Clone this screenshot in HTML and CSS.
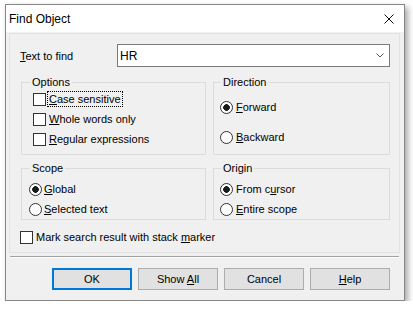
FILE: index.html
```html
<!DOCTYPE html>
<html lang="en">
<head>
  <meta charset="UTF-8">
  <title>Find Object</title>
  <link rel="stylesheet" href="styles.css">
</head>
<body>
  <div class="window">
    <div class="titlebar">
      <span class="title">Find Object</span>
      <svg class="close" width="10" height="10" viewBox="0 0 10 10">
        <path d="M0.5 0.5 L9.5 9.5 M9.5 0.5 L0.5 9.5" stroke="#111" stroke-width="1" fill="none"/>
      </svg>
    </div>
    <div class="client">
      <div class="panel">
        <div class="find-row">
          <span class="find-label"><u>T</u>ext to find</span>
          <div class="combo">
            <span>HR</span>
            <svg width="8" height="5" viewBox="0 0 8 5">
              <path d="M0.5 0.5 L4 4 L7.5 0.5" stroke="#555" stroke-width="1" fill="none"/>
            </svg>
          </div>
        </div>

        <div class="groups">
          <fieldset class="group">
            <legend class="wide">Options</legend>
            <div class="items options">
              <div class="item"><span class="check"></span><span class="focus"><u>C</u>ase sensitive</span></div>
              <div class="item"><span class="check"></span><span><u>W</u>hole words only</span></div>
              <div class="item"><span class="check"></span><span><u>R</u>egular expressions</span></div>
            </div>
          </fieldset>
          <fieldset class="group">
            <legend>Direction</legend>
            <div class="items direction">
              <div class="item"><span class="radio on"></span><span><u>F</u>orward</span></div>
              <div class="item"><span class="radio"></span><span><u>B</u>ackward</span></div>
            </div>
          </fieldset>
          <fieldset class="group">
            <legend class="wide">Scope</legend>
            <div class="items scope">
              <div class="item"><span class="radio on"></span><span><u>G</u>lobal</span></div>
              <div class="item"><span class="radio"></span><span><u>S</u>elected text</span></div>
            </div>
          </fieldset>
          <fieldset class="group">
            <legend>Origin</legend>
            <div class="items origin">
              <div class="item"><span class="radio on"></span><span>From c<u>u</u>rsor</span></div>
              <div class="item"><span class="radio"></span><span><u>E</u>ntire scope</span></div>
            </div>
          </fieldset>
        </div>

        <div class="item mark"><span class="check"></span><span>Mark search result with stack <u>m</u>arker</span></div>
      </div>

      <div class="separator"></div>

      <div class="buttons">
        <button class="btn default">OK</button>
        <button class="btn">Show <u>A</u>ll</button>
        <button class="btn">Cancel</button>
        <button class="btn"><u>H</u>elp</button>
      </div>
    </div>
  </div>
</body>
</html>
```

FILE: styles.css
```css
body {
  margin: 0;
  background: #fff;
  font-family: 'Liberation Sans', Arial, sans-serif;
  font-size: 11px;
  color: #000;
}
.window {
  margin: 4px 0 0 5px;
  width: 400px;
  height: 297px;
  box-sizing: border-box;
  border: 1px solid #868686;
  background: #f0f0f0;
  box-shadow: 3px 3px 6px rgba(0,0,0,0.35);
  display: flex;
  flex-direction: column;
}
.titlebar {
  height: 27px;
  background: #fff;
  display: flex;
  align-items: center;
  justify-content: space-between;
  padding: 0 10px 0 3px;
}
.title {
  font-size: 12px;
}
.close {
  display: block;
}
.client {
  flex: 1;
  padding: 1px 4px 0 3px;
}
.panel {
  height: 220px;
  box-sizing: border-box;
  border: 1px solid #e2e2e2;
  padding: 10px 9px 0 10px;
}
.find-row {
  display: flex;
  align-items: center;
  height: 23px;
}
.find-label {
  width: 97px;
}
.combo {
  flex: 1;
  height: 23px;
  box-sizing: border-box;
  border: 1px solid #7a7a7a;
  background: #fff;
  display: flex;
  align-items: center;
  justify-content: space-between;
  padding: 0 5px 0 2px;
  font-size: 12px;
}
.combo svg {
  display: block;
}
.groups {
  margin: 9px 0 0 1px;
  display: grid;
  grid-template-columns: 185px 177px;
  grid-template-rows: 79px 58px;
  column-gap: 7px;
  row-gap: 7px;
}
.group {
  margin: 0;
  padding: 0;
  border: 1px solid #dcdcdc;
  min-width: 0;
}
.group legend {
  margin-left: 7px;
  padding: 0 2px;
  line-height: 13px;
}
.group legend.wide {
  margin-left: 8px;
}
.item {
  display: flex;
  align-items: center;
  gap: 3px;
  height: 20px;
}
.options {
  padding-left: 11px;
}
.direction {
  padding: 8px 0 0 6px;
}
.direction .item + .item {
  margin-top: 10px;
}
.scope {
  padding: 4px 0 0 7px;
}
.scope .item {
  gap: 2px;
}
.origin {
  padding: 4px 0 0 6px;
}
.check {
  width: 13px;
  height: 13px;
  box-sizing: border-box;
  border: 1px solid #333;
  background: #fff;
}
.radio {
  width: 13px;
  height: 13px;
  box-sizing: border-box;
  border: 1px solid #333;
  border-radius: 50%;
  background: #fff;
}
.radio.on {
  background: radial-gradient(circle, #1a1a1a 3px, #fff 3.6px);
}
.focus {
  outline: 1px dotted #000;
  outline-offset: 0;
  padding: 1px 1px;
  margin-left: -1px;
}
.mark {
  margin-top: 7px;
}
.separator {
  margin: 3px 1px 0 1px;
  border-top: 1px solid #a0a0a0;
  border-bottom: 1px solid #fff;
}
.buttons {
  display: flex;
  justify-content: flex-end;
  gap: 6px;
  padding: 10px 10px 0 0;
}
.btn {
  width: 80px;
  height: 22px;
  box-sizing: border-box;
  border: 1px solid #adadad;
  background: #e1e1e1;
  font-family: 'Liberation Sans', Arial, sans-serif;
  font-size: 11px;
  color: #000;
  padding: 0;
}
.btn.default {
  border: 2px solid #0078d7;
}
```
